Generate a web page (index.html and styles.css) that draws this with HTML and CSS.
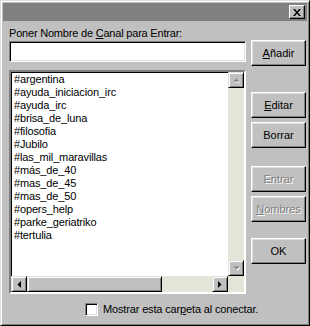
FILE: index.html
```html
<!DOCTYPE html>
<html lang="es">
  <head>
    <meta charset="UTF-8" />
    <title>Carpeta de canales</title>
    <link rel="stylesheet" href="styles.css">
  </head>
  <body>
    <div class="window">
      <div class="titlebar">
        <button class="close">
          <svg width="8" height="7" viewBox="0 0 8 7">
            <path d="M0 0h2l2 2.5L6 0h2L5 3.5 8 7H6L4 4.5 2 7H0l3-3.5z" fill="#000" />
          </svg>
        </button>
      </div>
      <div class="content">
        <div class="main">
          <div class="left">
            <label class="caption" for="canal">Poner Nombre de <u>C</u>anal para Entrar:</label>
            <input class="field" id="canal" type="text" />
            <div class="listbox">
              <ul class="items">
                <li>#argentina</li>
                <li>#ayuda_iniciacion_irc</li>
                <li>#ayuda_irc</li>
                <li>#brisa_de_luna</li>
                <li>#filosofia</li>
                <li>#Jubilo</li>
                <li>#las_mil_maravillas</li>
                <li>#más_de_40</li>
                <li>#mas_de_45</li>
                <li>#mas_de_50</li>
                <li>#opers_help</li>
                <li>#parke_geriatriko</li>
                <li>#tertulia</li>
              </ul>
              <div class="vscroll">
                <span class="arrow">
                  <svg width="7" height="5" viewBox="0 0 7 5">
                    <path d="M4.5 1.5l3 3h-6z" fill="#fff" />
                    <path d="M3.5 0.5l3 3h-6z" fill="#808080" />
                  </svg>
                </span>
                <span class="track"></span>
                <span class="arrow">
                  <svg width="7" height="5" viewBox="0 0 7 5">
                    <path d="M1.5 1.5h6l-3 3z" fill="#fff" />
                    <path d="M0.5 0.5h6l-3 3z" fill="#808080" />
                  </svg>
                </span>
              </div>
              <div class="hscroll">
                <span class="arrow">
                  <svg width="4" height="7" viewBox="0 0 4 7">
                    <path d="M4 0v7L0.5 3.5z" fill="#000" />
                  </svg>
                </span>
                <span class="thumb"></span>
                <span class="track"></span>
                <span class="arrow">
                  <svg width="4" height="7" viewBox="0 0 4 7">
                    <path d="M0 0v7l3.5-3.5z" fill="#000" />
                  </svg>
                </span>
              </div>
              <div class="corner"></div>
            </div>
          </div>
          <div class="buttons">
            <button class="btn"><u>A</u>ñadir</button>
            <button class="btn edit"><u>E</u>ditar</button>
            <button class="btn near">Borrar</button>
            <button class="btn enter" disabled>Entrar</button>
            <button class="btn near" disabled><u>N</u>ombres</button>
            <button class="btn ok">OK</button>
          </div>
        </div>
        <label class="footer">
          <span class="check"></span>
          <span>Mostrar esta car<u>p</u>eta al conectar.</span>
        </label>
      </div>
    </div>
  </body>
</html>
```

FILE: styles.css
```css
body {
  margin: 0;
  background: #c0c0c0;
}
.window {
  width: 310px;
  height: 326px;
  box-sizing: border-box;
  padding: 2px;
  background: #c0c0c0;
  border: 1px solid;
  border-color: #dfdfdf #000 #000 #dfdfdf;
  box-shadow: inset 1px 1px #fff, inset -1px -1px #808080;
  font-family: 'Liberation Sans', Arial, sans-serif;
  font-size: 11px;
  color: #000;
}
.titlebar {
  height: 18px;
  background: #808080;
  display: flex;
  align-items: center;
  justify-content: flex-end;
  padding-right: 2px;
}
.close {
  width: 16px;
  height: 14px;
  padding: 0;
  display: flex;
  align-items: center;
  justify-content: center;
  background: #c0c0c0;
  border: 1px solid;
  border-color: #fff #000 #000 #fff;
  box-shadow: inset -1px -1px #808080;
}
.content {
  padding: 6px 1px 0 6px;
}
.main {
  display: flex;
  gap: 5px;
}
.left {
  width: 237px;
  display: flex;
  flex-direction: column;
}
.caption {
  line-height: 13px;
  height: 13px;
  letter-spacing: -0.2px;
}
.field {
  margin: 1px 0 0;
  height: 21px;
  box-sizing: border-box;
  background: #fff;
  border: 1px solid;
  border-color: #808080 #fff #fff #808080;
  box-shadow: inset 1px 1px #000, inset -1px -1px #dfdfdf;
}
.listbox {
  margin-top: 8px;
  height: 224px;
  box-sizing: border-box;
  display: grid;
  grid-template-columns: 1fr 16px;
  grid-template-rows: 1fr 16px;
  background: #fff;
  border: 2px solid;
  border-color: #808080 #fff #fff #808080;
  box-shadow: inset 1px 1px #000;
}
.items {
  list-style: none;
  margin: 0;
  padding: 1px 0 0 3px;
  line-height: 13px;
  letter-spacing: -0.15px;
}
.vscroll {
  display: flex;
  flex-direction: column;
}
.hscroll {
  display: flex;
}
.arrow,
.thumb {
  width: 16px;
  height: 16px;
  box-sizing: border-box;
  display: flex;
  align-items: center;
  justify-content: center;
  background: #c0c0c0;
  border: 1px solid;
  border-color: #dfdfdf #000 #000 #dfdfdf;
  box-shadow: inset 1px 1px #fff, inset -1px -1px #808080;
}
.thumb {
  width: 135px;
}
.track,
.corner {
  flex-grow: 1;
  background: #e4e4d8;
}
.buttons {
  width: 55px;
  margin-top: 13px;
  display: flex;
  flex-direction: column;
}
.btn {
  height: 26px;
  padding: 0;
  font: inherit;
  color: #000;
  background: #c0c0c0;
  border: 1px solid;
  border-color: #fff #000 #000 #fff;
  box-shadow: inset -1px -1px #808080, inset 1px 1px #dfdfdf;
}
.btn:disabled {
  color: #808080;
  text-shadow: 1px 1px #fff;
}
.edit {
  margin-top: 26px;
}
.near {
  margin-top: 4px;
}
.enter {
  margin-top: 18px;
}
.ok {
  margin-top: 16px;
}
.footer {
  margin: 9px 0 0 76px;
  display: flex;
  align-items: center;
  gap: 5px;
  line-height: 13px;
  letter-spacing: -0.15px;
}
.check {
  width: 13px;
  height: 13px;
  box-sizing: border-box;
  background: #fff;
  border: 1px solid;
  border-color: #808080 #fff #fff #808080;
  box-shadow: inset 1px 1px #000, inset -1px -1px #dfdfdf;
}
```
